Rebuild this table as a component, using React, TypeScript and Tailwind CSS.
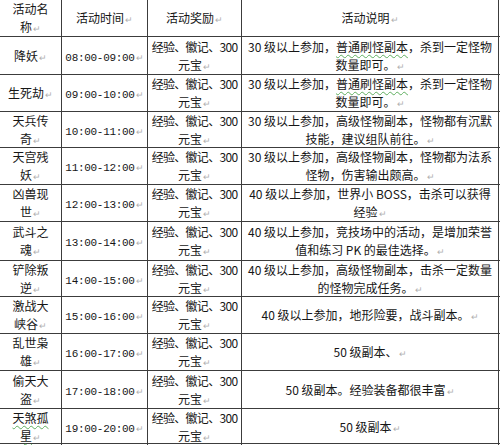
const ROWS = [
  { name: ["降妖"], time: "08:00-09:00", desc: ["30 级以上参加，", "@普通刷怪副本", "，杀到一定怪物", "|数量即可。"], h: 38 },
  { name: ["生死劫"], time: "09:00-10:00", desc: ["30 级以上参加，", "@普通刷怪副本", "，杀到一定怪物", "|数量即可。"], h: 37 },
  { name: ["天兵传", "奇"], time: "10:00-11:00", desc: ["30 级以上参加，高级怪物副本，怪物都有沉默", "|技能，建议组队前往。"], h: 36 },
  { name: ["天宫残", "妖"], time: "11:00-12:00", desc: ["30 级以上参加，高级怪物副本，怪物都为法系", "|怪物，伤害输出颇高。"], h: 37 },
  { name: ["凶兽现", "世"], time: "12:00-13:00", desc: ["40 级以上参加，世界小 BOSS，击杀可以获得", "|经验"], h: 37 },
  { name: ["武斗之", "魂"], time: "13:00-14:00", desc: ["40 级以上参加，竞技场中的活动，是增加荣誉", "|值和练习 PK 的最佳选择。"], h: 39 },
  { name: ["铲除叛", "逆"], time: "14:00-15:00", desc: ["40 级以上参加，高级怪物副本，击杀一定数量", "|的怪物完成任务。"], h: 36 },
  { name: ["激战大", "峡谷"], time: "15:00-16:00", desc: ["40 级以上参加，地形险要，战斗副本。"], h: 37 },
  { name: ["乱世枭", "雄"], time: "16:00-17:00", desc: ["50 级副本、"], h: 37 },
  { name: ["偷天大", "盗"], time: "17:00-18:00", desc: ["50 级副本。经验装备都很丰富"], h: 38 },
  { name: ["天煞孤", "星"], time: "19:00-20:00", desc: ["50 级副本"], h: 35, wavy: true },
];

const WAVY = "underline decoration-wavy decoration-[#5fae5f] decoration-1 underline-offset-2";

function Mark() {
  return <span className="ml-px text-[9px] leading-none text-[#b0b0b0]">↵</span>;
}

function Desc({ parts }: { parts: string[] }) {
  // "|" starts a new line, "@" marks a green wavy underline
  const lines: string[][] = [[]];
  parts.forEach((p) => {
    if (p.startsWith("|")) lines.push([p.slice(1)]);
    else lines[lines.length - 1].push(p);
  });
  return (
    <>
      {lines.map((line, i) => (
        <div key={i} className="whitespace-nowrap">
          {line.map((p, j) =>
            p.startsWith("@") ? (
              <span key={j} className={WAVY}>
                {p.slice(1)}
              </span>
            ) : (
              <span key={j}>{p}</span>
            )
          )}
          {i === lines.length - 1 && <Mark />}
        </div>
      ))}
    </>
  );
}

function Reward() {
  return (
    <>
      <div className="whitespace-nowrap tracking-[-0.7px]">经验、徽记、300</div>
      <div>
        元宝
        <Mark />
      </div>
    </>
  );
}

const GRID = "grid grid-cols-[62px_86px_94px_257px] border-b border-[#3c3c3c]";
const CELL = "flex flex-col items-center justify-center text-center border-r border-[#3c3c3c]";

export default function App() {
  return (
    <div className="w-[500px] h-[445px] overflow-hidden bg-white text-[#161616] text-[12px] leading-[18px] font-['Noto_Sans_CJK_SC',sans-serif]">
      <div className={`${GRID} h-[37px]`}>
        <div className={CELL}>
          <div>活动名</div>
          <div>
            称<Mark />
          </div>
        </div>
        <div className={CELL}>
          <div>
            活动时间<Mark />
          </div>
        </div>
        <div className={CELL}>
          <div>
            活动奖励<Mark />
          </div>
        </div>
        <div className={CELL}>
          <div>
            活动说明<Mark />
          </div>
        </div>
      </div>
      {ROWS.map((r) => (
        <div key={r.time} className={GRID} style={{ height: r.h }}>
          <div className={CELL}>
            {r.name.map((n, i) => (
              <div key={i}>
                <span className={r.wavy ? WAVY : ""}>{n}</span>
                {i === r.name.length - 1 && <Mark />}
              </div>
            ))}
          </div>
          <div className={CELL}>
            <div className="whitespace-nowrap">
              <span className="font-['Liberation_Mono',monospace] text-[11px] leading-none tracking-[-0.3px]">
                {r.time}
              </span>
              <Mark />
            </div>
          </div>
          <div className={CELL}>
            <Reward />
          </div>
          <div className={CELL}>
            <Desc parts={r.desc} />
          </div>
        </div>
      ))}
    </div>
  );
}
